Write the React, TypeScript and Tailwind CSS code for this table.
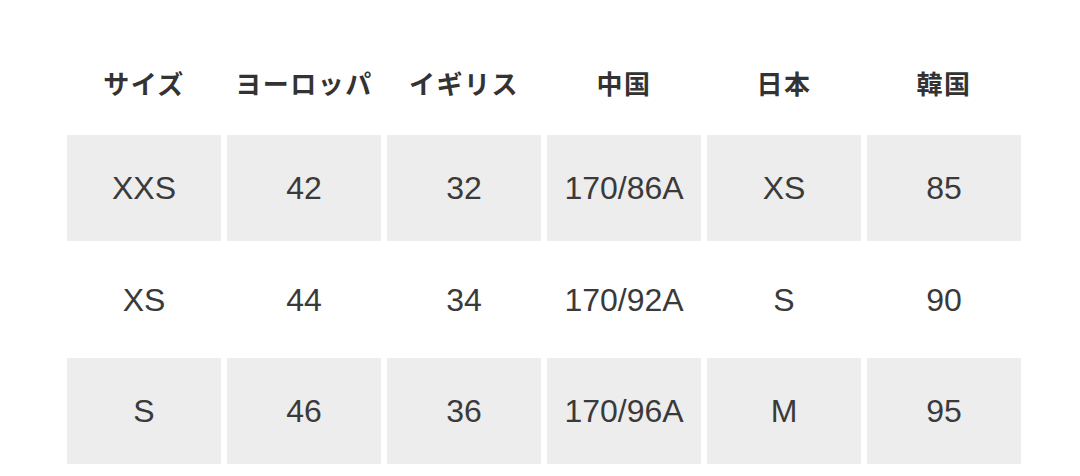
import React from "react";

const headers = ["サイズ", "ヨーロッパ", "イギリス", "中国", "日本", "韓国"];
const rows = [
  ["XXS", "42", "32", "170/86A", "XS", "85"],
  ["XS", "44", "34", "170/92A", "S", "90"],
  ["S", "46", "36", "170/96A", "M", "95"],
];

export default function App() {
  return (
    <div className="w-[1080px] h-[476px] bg-white overflow-hidden pt-[29px] pl-[67px]">
      <div className="w-[954px]">
        <div className="grid grid-cols-6 gap-x-[6px] h-[106px]">
          {headers.map((h) => (
            <div
              key={h}
              className="flex items-center justify-center text-[26px] font-bold text-[#333333] tracking-[1.5px]"
              style={{ fontFamily: '"Noto Sans CJK JP", "Noto Sans", sans-serif' }}
            >
              {h}
            </div>
          ))}
        </div>
        <div className="flex flex-col gap-y-[5.5px]">
          {rows.map((r, i) => (
            <div key={i} className="grid grid-cols-6 gap-x-[6px] h-[106px]">
              {r.map((c, j) => (
                <div
                  key={j}
                  className={`flex items-center justify-center text-[32px] text-[#3a3a3a] ${
                    i % 2 === 0 ? "bg-[#ededed]" : "bg-white"
                  }`}
                  style={{ fontFamily: '"Liberation Sans", Arial, sans-serif' }}
                >
                  {c}
                </div>
              ))}
            </div>
          ))}
        </div>
      </div>
    </div>
  );
}
